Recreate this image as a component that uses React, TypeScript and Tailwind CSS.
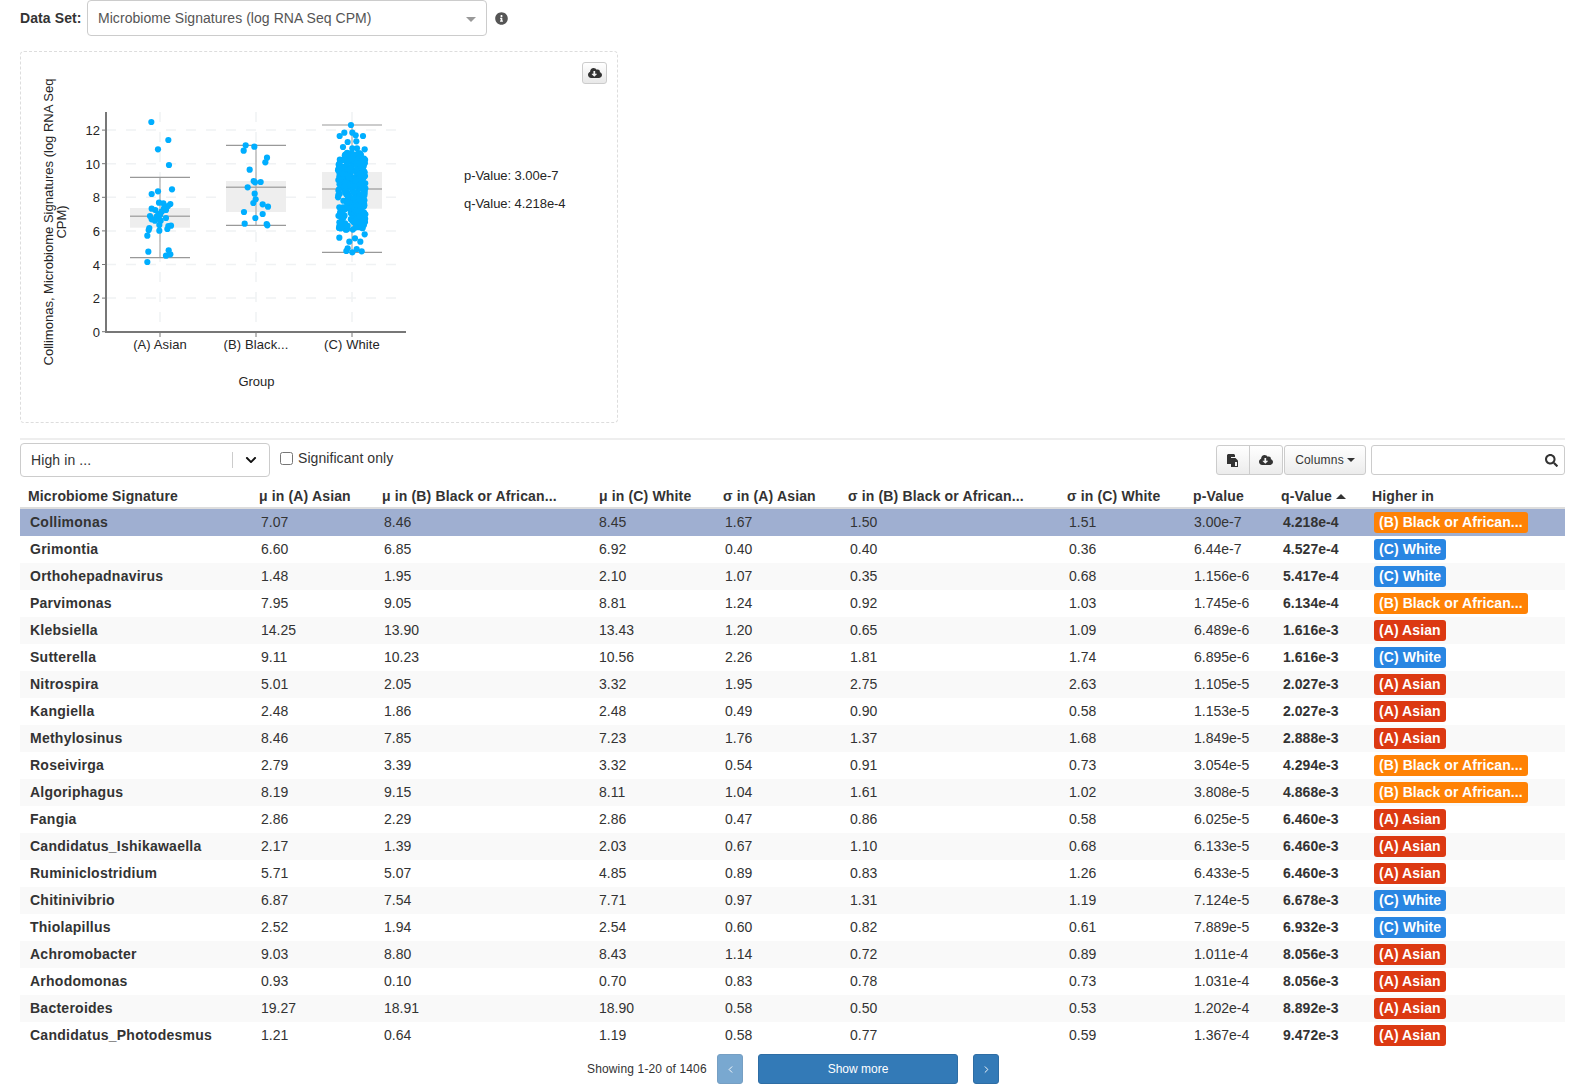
import { FaChevronDown, FaCloudDownloadAlt, FaInfoCircle, FaSearch } from 'react-icons/fa'
import { ChevronLeft, ChevronRight } from 'lucide-react'

type Group = 'A' | 'B' | 'C'

const rows: [string, string, string, string, string, string, string, string, string, Group][] = [
  ['Collimonas', '7.07', '8.46', '8.45', '1.67', '1.50', '1.51', '3.00e-7', '4.218e-4', 'B'],
  ['Grimontia', '6.60', '6.85', '6.92', '0.40', '0.40', '0.36', '6.44e-7', '4.527e-4', 'C'],
  ['Orthohepadnavirus', '1.48', '1.95', '2.10', '1.07', '0.35', '0.68', '1.156e-6', '5.417e-4', 'C'],
  ['Parvimonas', '7.95', '9.05', '8.81', '1.24', '0.92', '1.03', '1.745e-6', '6.134e-4', 'B'],
  ['Klebsiella', '14.25', '13.90', '13.43', '1.20', '0.65', '1.09', '6.489e-6', '1.616e-3', 'A'],
  ['Sutterella', '9.11', '10.23', '10.56', '2.26', '1.81', '1.74', '6.895e-6', '1.616e-3', 'C'],
  ['Nitrospira', '5.01', '2.05', '3.32', '1.95', '2.75', '2.63', '1.105e-5', '2.027e-3', 'A'],
  ['Kangiella', '2.48', '1.86', '2.48', '0.49', '0.90', '0.58', '1.153e-5', '2.027e-3', 'A'],
  ['Methylosinus', '8.46', '7.85', '7.23', '1.76', '1.37', '1.68', '1.849e-5', '2.888e-3', 'A'],
  ['Roseivirga', '2.79', '3.39', '3.32', '0.54', '0.91', '0.73', '3.054e-5', '4.294e-3', 'B'],
  ['Algoriphagus', '8.19', '9.15', '8.11', '1.04', '1.61', '1.02', '3.808e-5', '4.868e-3', 'B'],
  ['Fangia', '2.86', '2.29', '2.86', '0.47', '0.86', '0.58', '6.025e-5', '6.460e-3', 'A'],
  ['Candidatus_Ishikawaella', '2.17', '1.39', '2.03', '0.67', '1.10', '0.68', '6.133e-5', '6.460e-3', 'A'],
  ['Ruminiclostridium', '5.71', '5.07', '4.85', '0.89', '0.83', '1.26', '6.433e-5', '6.460e-3', 'A'],
  ['Chitinivibrio', '6.87', '7.54', '7.71', '0.97', '1.31', '1.19', '7.124e-5', '6.678e-3', 'C'],
  ['Thiolapillus', '2.52', '1.94', '2.54', '0.60', '0.82', '0.61', '7.889e-5', '6.932e-3', 'C'],
  ['Achromobacter', '9.03', '8.80', '8.43', '1.14', '0.72', '0.89', '1.011e-4', '8.056e-3', 'A'],
  ['Arhodomonas', '0.93', '0.10', '0.70', '0.83', '0.78', '0.73', '1.031e-4', '8.056e-3', 'A'],
  ['Bacteroides', '19.27', '18.91', '18.90', '0.58', '0.50', '0.53', '1.202e-4', '8.892e-3', 'A'],
  ['Candidatus_Photodesmus', '1.21', '0.64', '1.19', '0.58', '0.77', '0.59', '1.367e-4', '9.472e-3', 'A'],
]

const badges = {
  A: { label: '(A) Asian', color: 'bg-[#dc3912]' },
  B: { label: '(B) Black or African...', color: 'bg-[#ff8205]' },
  C: { label: '(C) White', color: 'bg-[#2986e2]' },
}

// dot positions read off the plot, in page pixels after the mapping below
const px = (x: number) => 90 + x / 3
const py = (y: number) => 100 + y / 3

const asianDots = [
  [184, 66], [235, 120], [204, 148], [237, 195], [246, 268], [204, 274], [185, 282], [207, 308], [220, 310],
  [241, 312], [234, 318], [185, 326], [196, 330], [228, 330], [215, 335], [222, 325], [180, 348], [200, 350],
  [210, 345], [205, 342], [228, 354], [185, 358], [195, 362], [212, 362], [208, 375], [243, 377], [235, 378],
  [232, 387], [178, 384], [176, 390], [208, 392], [172, 407], [236, 451], [175, 455], [241, 463], [228, 467], [172, 486],
]

const blackDots = [
  [467, 136], [461, 152], [493, 140], [531, 173], [526, 187], [479, 209], [491, 243], [495, 247], [512, 246],
  [473, 262], [494, 281], [497, 298], [490, 309], [518, 313], [534, 320], [462, 336], [518, 342], [496, 354],
  [464, 371], [530, 372], [532, 376],
]

const whiteEdge = [
  [783, 75], [749, 108], [763, 98], [787, 98], [797, 106], [819, 108], [799, 124], [773, 126], [759, 141],
  [787, 145], [801, 145], [824, 148], [748, 413], [824, 403], [795, 415], [778, 425], [811, 425], [773, 445],
  [769, 453], [787, 457], [815, 454], [800, 447], [826, 343], [825, 366], [813, 382], [748, 322], [747, 384],
  [750, 184], [822, 176], [825, 228], [745, 240], [826, 265], [745, 285], [822, 310], [748, 378],
]

function makeWhiteDots() {
  const dots: number[][] = [...whiteEdge]
  let seed = 42
  const next = () => {
    seed = (seed * 1103515245 + 12345) % 2147483648
    return seed / 2147483648
  }
  for (let i = 0; i < 290; i++) {
    const x = 744 + next() * 82
    const y = 158 + next() * 232
    if (y > 306 && y < 320 && x < 762) continue
    // tapers a little toward the top of the cloud
    const placed = y < 178 ? 762 + (x - 744) * 0.65 : x
    dots.push([placed, y])
  }
  return dots
}

const whiteDots = makeWhiteDots()

const boxes = [
  { x: 130, top: 324, bottom: 383, median: 349, hi: 232, lo: 473 },
  { x: 226, top: 243, bottom: 336, median: 262, hi: 136, lo: 376 },
  { x: 322, top: 216, bottom: 326, median: 267, hi: 75, lo: 457 },
]

const yTicks = [0, 2, 4, 6, 8, 10, 12]
const cats = [
  { x: 160, label: '(A) Asian' },
  { x: 256, label: '(B) Black...' },
  { x: 352, label: '(C) White' },
]

function BoxPlot() {
  return (
    <svg viewBox="21 52 596 370" className="block w-[596px] h-[370px]" fontFamily="'Liberation Sans', Arial, sans-serif" fontSize="13" fill="#252525">
      {yTicks.map((t) => {
        const y = 331.7 - t * 16.8
        return (
          <g key={t}>
            {t > 0 && <line x1={106} x2={402} y1={y} y2={y} stroke="#f0f2f4" strokeWidth={1.5} strokeDasharray="10 10" />}
            <line x1={102} x2={106} y1={y} y2={y} stroke="#777" strokeWidth={1} />
            <text x={100} y={y + 5} textAnchor="end">{t}</text>
          </g>
        )
      })}
      {cats.map((c) => (
        <g key={c.x}>
          <line x1={c.x} x2={c.x} y1={112} y2={331} stroke="#f0f2f4" strokeWidth={1.5} strokeDasharray="10 10" />
          <line x1={c.x} x2={c.x} y1={332} y2={337} stroke="#777" strokeWidth={1} />
          <text x={c.x} y={349} textAnchor="middle" letterSpacing={0.1}>{c.label}</text>
        </g>
      ))}
      {boxes.map((b) => (
        <g key={b.x}>
          <rect x={b.x} width={60} y={py(b.top)} height={(b.bottom - b.top) / 3} fill="#eeeeee" />
          <line x1={b.x + 30} x2={b.x + 30} y1={py(b.hi)} y2={py(b.lo)} stroke="#bbbbbb" strokeWidth={1.5} />
          <line x1={b.x} x2={b.x + 60} y1={py(b.hi)} y2={py(b.hi)} stroke="#999999" strokeWidth={1.2} />
          <line x1={b.x} x2={b.x + 60} y1={py(b.lo)} y2={py(b.lo)} stroke="#999999" strokeWidth={1.2} />
          <line x1={b.x} x2={b.x + 60} y1={py(b.median)} y2={py(b.median)} stroke="#aaaaaa" strokeWidth={1.5} />
        </g>
      ))}
      {[...asianDots, ...blackDots, ...whiteDots].map(([x, y], i) => (
        <circle key={i} cx={px(x)} cy={py(y)} r={3.1} fill="#00aeff" />
      ))}
      <line x1={106} x2={106} y1={112} y2={332} stroke="#777" strokeWidth={2} />
      <line x1={105} x2={406} y1={332} y2={332} stroke="#777" strokeWidth={2} />
      <text x={256.5} y={386} textAnchor="middle">Group</text>
      <text transform="translate(53 222) rotate(-90)" textAnchor="middle">Collimonas, Microbiome Signatures (log RNA Seq</text>
      <text transform="translate(66 222) rotate(-90)" textAnchor="middle">CPM)</text>
      <text x={464} y={180} letterSpacing={-0.05}>p-Value: 3.00e-7</text>
      <text x={464} y={208} letterSpacing={-0.05}>q-Value: 4.218e-4</text>
    </svg>
  )
}

function CopyIcon() {
  return (
    <svg width="12" height="13" viewBox="0 0 12 13">
      <path fill="#333" d="M1 0h6l1 1v2H4v7H0V1z" />
      <path fill="#333" d="M4 4h4.5L11 6.5V13H4z" />
      <path fill="#f4f4f4" d="M8 8h2v4H8z" />
    </svg>
  )
}

const headers = [
  'μ in (A) Asian',
  'μ in (B) Black or African...',
  'μ in (C) White',
  'σ in (A) Asian',
  'σ in (B) Black or African...',
  'σ in (C) White',
  'p-Value',
]

// cell text sits a touch left of its usual padding in a few columns
const cellPad = ['pl-[10px]', 'pl-[10px]', 'pl-[8px]', 'pl-[10px]', 'pl-[10px]', 'pl-[10px]', 'pl-[9px]']

const thClass = "pl-[8px] pt-[8px] text-left font-bold tracking-[0.15px] border-b-2 border-[#ddd]"

export default function App() {
  return (
    <div className="px-[20px] text-[14px] text-[#333] font-['Liberation_Sans',Arial,sans-serif]">
      <div className="flex items-center h-[36px]">
        <span className="w-[67px] font-bold tracking-[0.1px]">Data Set:</span>
        <div className="relative flex items-center w-[400px] h-[36px] border border-[#ccc] rounded-[4px] pl-[10px] text-[#555] bg-white tracking-[0.05px]">
          Microbiome Signatures (log RNA Seq CPM)
          <span className="absolute right-[10px] top-[16px] border-x-[5px] border-x-transparent border-t-[5px] border-t-[#999]" />
        </div>
        <FaInfoCircle className="ml-[8px] text-[#555]" size={13} />
      </div>

      <div className="relative mt-[15px] w-[598px] h-[372px] border border-dashed border-[#ddd] rounded-[4px]">
        <BoxPlot />
        <button className="absolute right-[10px] top-[10px] w-[25px] h-[22px] flex items-center justify-center border border-[#ccc] rounded-[3px] bg-linear-to-b from-white to-[#e8e8e8] text-[#333]">
          <FaCloudDownloadAlt size={14} />
        </button>
      </div>

      <div className="mt-[15px] h-[2px] bg-[#eee]" />

      <div className="flex items-start mt-[3px] h-[34px]">
        <div className="flex items-center w-[250px] h-[34px] border border-[#ccc] rounded-[4px] pl-[10px] pr-[10px] bg-white">
          <span className="flex-1 tracking-[0.1px]">High in ...</span>
          <span className="w-px h-[16px] bg-[#ccc] mr-[12px]" />
          <FaChevronDown size={12} className="text-[#111] mr-[2px]" />
        </div>
        <label className="flex items-center ml-[10px] h-[30px] text-[#333] tracking-[0.07px]">
          <input type="checkbox" className="w-[13px] h-[13px] mr-[5px]" />
          Significant only
        </label>
        <div className="ml-auto flex mt-[2px]">
          <div className="flex h-[30px] border border-[#ccc] rounded-[3px] bg-linear-to-b from-white to-[#ececec] text-[#333]">
            <span className="flex items-center justify-center w-[33px] border-r border-[#ccc]"><CopyIcon /></span>
            <span className="flex items-center justify-center w-[32px]"><FaCloudDownloadAlt size={14} /></span>
          </div>
          <div className="flex items-center justify-center w-[82px] h-[30px] border border-[#ccc] rounded-[3px] bg-linear-to-b from-white to-[#ececec] text-[12px] tracking-[0.2px] ml-[1px]">
            Columns
            <span className="ml-[3px] border-x-[4px] border-x-transparent border-t-[4px] border-t-[#333]" />
          </div>
          <div className="relative w-[194px] h-[30px] border border-[#ccc] rounded-[3px] bg-white ml-[5px]">
            <FaSearch size={13} className="absolute right-[6px] top-[8px] text-[#333]" />
          </div>
        </div>
      </div>

      <table className="table-fixed w-[1545px] border-separate border-spacing-0">
        <colgroup>
          <col className="w-[231px]" />
          <col className="w-[123px]" />
          <col className="w-[217px]" />
          <col className="w-[124px]" />
          <col className="w-[125px]" />
          <col className="w-[219px]" />
          <col className="w-[126px]" />
          <col className="w-[88px]" />
          <col className="w-[91px]" />
          <col className="w-[201px]" />
        </colgroup>
        <thead>
          <tr className="h-[32px]">
            <th className={thClass}>Microbiome Signature</th>
            {headers.map((h) => (
              <th key={h} className={thClass}>{h}</th>
            ))}
            <th className={thClass}>
              <span className="inline-flex items-center">
                q-Value
                <span className="ml-[4px] border-x-[5px] border-x-transparent border-b-[5px] border-b-[#333]" />
              </span>
            </th>
            <th className={thClass}>Higher in</th>
          </tr>
        </thead>
        <tbody>
          {rows.map((r, i) => {
            const badge = badges[r[9]]
            const bg = i === 0 ? 'bg-[#9fafd1]' : i % 2 === 0 ? 'bg-[#f9f9f9]' : 'bg-white'
            return (
              <tr key={r[0]} className={`h-[27px] ${bg}`}>
                <td className="pl-[10px] font-bold tracking-[0.25px]">{r[0]}</td>
                {r.slice(1, 8).map((v, j) => (
                  <td key={j} className={cellPad[j]}>{v}</td>
                ))}
                <td className="pl-[10px] font-bold tracking-[0.05px]">{r[8]}</td>
                <td className="pl-[10px]">
                  <span className={`inline-block h-[21px] leading-[21px] px-[5px] rounded-[3px] font-bold text-white align-middle tracking-[0.08px] ${badge.color}`}>
                    {badge.label}
                  </span>
                </td>
              </tr>
            )
          })}
        </tbody>
      </table>

      <div className="flex items-center mt-[5px] ml-[567px] h-[30px] text-[12px]">
        <span className="w-[130px] tracking-[0.15px]">Showing 1-20 of 1406</span>
        <button className="flex items-center justify-center w-[26px] h-[30px] rounded-[3px] border border-[#2e6da4] bg-[#337ab7] text-white opacity-65">
          <ChevronLeft size={11} />
        </button>
        <button className="w-[200px] h-[30px] ml-[15px] rounded-[3px] border border-[#2e6da4] bg-[#337ab7] text-white">Show more</button>
        <button className="flex items-center justify-center w-[26px] h-[30px] ml-[15px] rounded-[3px] border border-[#2e6da4] bg-[#337ab7] text-white">
          <ChevronRight size={11} />
        </button>
      </div>
    </div>
  )
}
